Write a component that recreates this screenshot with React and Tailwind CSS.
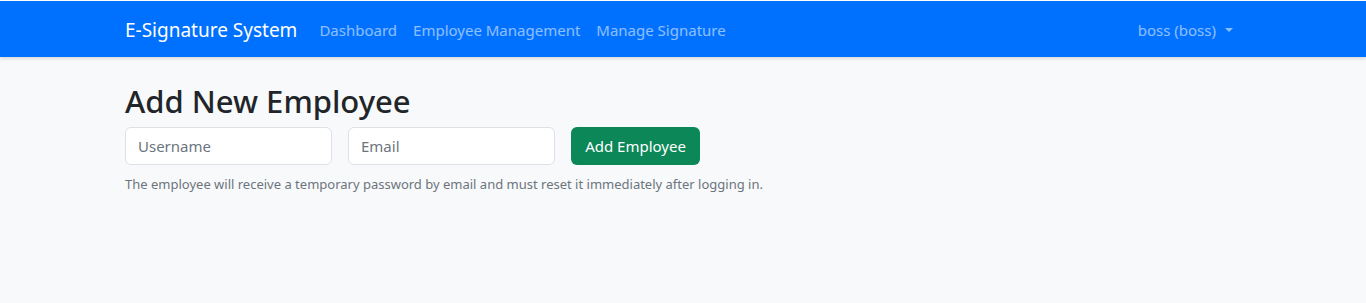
export default function App() {
  return (
    <div
      className="min-h-[303px] bg-[#f8f9fa] text-[#212529]"
      style={{ fontFamily: '"Noto Sans", "Open Sans", sans-serif' }}
    >
      {/* navbar */}
      <div className="pt-px bg-[#fdfdfd]">
        <nav className="h-14 bg-[#0070ff] shadow-[0_2px_3px_rgba(0,0,0,0.12)]">
          <div className="mx-auto flex h-full w-[1140px] items-center px-3 pt-[2px]">
            <span className="mr-[22px] text-[19px] text-white">E-Signature System</span>
            <div className="flex gap-4 text-[15px] text-white/55">
              <span>Dashboard</span>
              <span>Employee Management</span>
              <span>Manage Signature</span>
            </div>
            <div className="ml-auto mr-[8px] flex items-center text-[15px] text-white/55">
              boss (boss)
              <span className="ml-[9px] inline-block border-x-[4px] border-t-[4px] border-x-transparent border-t-white/55" />
            </div>
          </div>
        </nav>
      </div>

      {/* content */}
      <main className="mx-auto w-[1140px] px-3 pt-[26px]">
        <h1 className="text-[31px] font-medium leading-[1.2] mb-[7px]">Add New Employee</h1>
        <form className="flex gap-4" onSubmit={(e) => e.preventDefault()}>
          <input
            type="text"
            placeholder="Username"
            className="h-[38px] w-[207px] rounded-md border border-[#dee2e6] bg-white px-3 text-[15px] placeholder:text-[#6c757d] outline-none"
          />
          <input
            type="email"
            placeholder="Email"
            className="h-[38px] w-[207px] rounded-md border border-[#dee2e6] bg-white px-3 text-[15px] placeholder:text-[#6c757d] outline-none"
          />
          <button className="h-[38px] w-[129px] rounded-md bg-[#0b8758] text-[15px] text-white">
            Add Employee
          </button>
        </form>
        <p className="mt-[10px] text-[13px] text-[#6c757d]">
          The employee will receive a temporary password by email and must reset it immediately after logging in.
        </p>
      </main>
    </div>
  );
}
